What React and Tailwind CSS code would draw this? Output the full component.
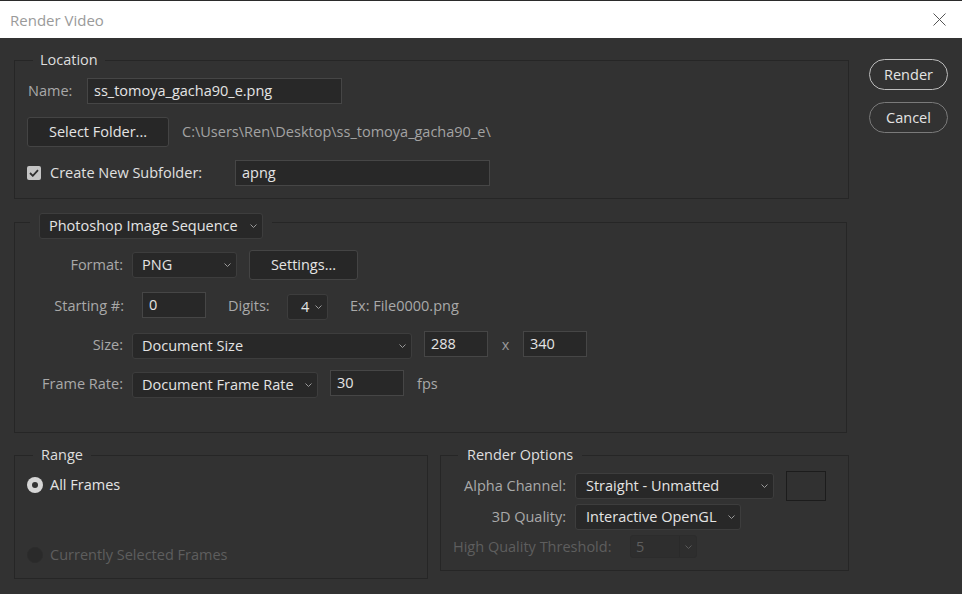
import React from "react";

const Chevron = ({ color = "#9a9a9a" }) => (
  <svg width="7" height="4" viewBox="0 0 7 4" className="shrink-0">
    <path d="M0.5 0.5 L3.5 3.5 L6.5 0.5" fill="none" stroke={color} strokeWidth="1" />
  </svg>
);

const Dropdown = ({ value, className = "" }) => (
  <div
    className={`flex h-[26px] items-center justify-between rounded-[3px] border border-[#3d3d3d] bg-[#282828] pl-[9px] pr-[5px] text-[#e4e4e4] ${className}`}
  >
    <span className="whitespace-nowrap">{value}</span>
    <Chevron />
  </div>
);

const TextInput = ({ value, className = "" }) => (
  <div
    className={`flex h-[26px] items-center border border-[#464646] bg-[#282828] pl-[6px] text-[#e4e4e4] ${className}`}
  >
    {value}
  </div>
);

const Label = ({ children, className = "" }) => (
  <span className={`whitespace-nowrap text-[#a9a9a9] ${className}`}>{children}</span>
);

const App = () => {
  return (
    <div className="h-[594px] w-[962px] overflow-hidden bg-[#2b2b2b] font-['Open_Sans',sans-serif] text-[14.5px] leading-[20px]">
      <div className="h-px bg-[#2b2b2b]" />

      {/* Title bar */}
      <div className="flex h-[37px] items-center justify-between bg-white pl-[10px] pr-[16px]">
        <span className="text-[15px] text-[#9a9a9a]">Render Video</span>
        <svg width="13" height="13" viewBox="0 0 13 13">
          <path d="M0.5 0.5 L12.5 12.5 M12.5 0.5 L0.5 12.5" stroke="#555" strokeWidth="1" />
        </svg>
      </div>

      {/* Body */}
      <div className="flex h-[556px] bg-[#323232] pl-[14px]">
        <div className="w-[835px] pt-[12px]">

          {/* Location */}
          <fieldset className="border border-[#262626] pb-[12px] pl-[13px] pt-[8px]">
            <legend className="ml-[5px] px-[7px] text-[#dedede]">Location</legend>

            <div className="flex h-[26px] items-center">
              <Label className="w-[59px]">Name:</Label>
              <TextInput value="ss_tomoya_gacha90_e.png" className="w-[255px]" />
            </div>

            <div className="mt-[13px] flex h-[30px] items-center">
              <button className="-ml-px h-[30px] w-[142px] rounded-[3px] border border-[#444] bg-[#272727] text-[#e4e4e4]">
                Select Folder...
              </button>
              <span className="ml-[13px] text-[#a3a3a3]">C:\Users\Ren\Desktop\ss_tomoya_gacha90_e\</span>
            </div>

            <div className="mt-[13px] flex h-[26px] items-center">
              <div className="-ml-px flex h-[14px] w-[14px] items-center justify-center rounded-[2px] bg-[#c4c4c4]">
                <svg width="10" height="8" viewBox="0 0 10 8">
                  <path d="M1 4 L3.8 6.8 L9 1.2" fill="none" stroke="#2e2e2e" strokeWidth="1.8" />
                </svg>
              </div>
              <span className="ml-[9px] w-[185px] text-[#e0e0e0]">Create New Subfolder:</span>
              <TextInput value="apng" className="w-[255px]" />
            </div>
          </fieldset>

          {/* Image sequence */}
          <fieldset className="mt-[7px] w-[833px] border border-[#262626] pb-[34px] pl-[13px] pt-[11px]">
            <legend className="ml-[2px] px-[9px] pt-[7px]">
              <Dropdown value="Photoshop Image Sequence" className="h-[25px] w-[224px]" />
            </legend>

            <div className="flex h-[30px] items-center">
              <Label className="w-[95px] text-right">Format:</Label>
              <Dropdown value="PNG" className="ml-[9px] w-[105px]" />
              <button className="ml-[12px] h-[30px] w-[109px] rounded-[3px] border border-[#444] bg-[#272727] text-[#e4e4e4]">
                Settings...
              </button>
            </div>

            <div className="mt-[12px] flex h-[28px] items-center">
              <Label className="w-[96px] text-right">Starting #:</Label>
              <TextInput value="0" className="ml-[18px] w-[64px] self-start" />
              <Label className="ml-[22px] w-[59px]">Digits:</Label>
              <div className="flex h-[26px] w-[41px] items-center justify-between self-end rounded-[3px] border border-[#3d3d3d] bg-[#282828] pl-[13px] pr-[5px] text-[#e4e4e4]">
                <span>4</span>
                <Chevron />
              </div>
              <Label className="ml-[22px]">Ex: File0000.png</Label>
            </div>

            <div className="mt-[11px] flex h-[28px] items-center">
              <Label className="w-[95px] text-right">Size:</Label>
              <Dropdown value="Document Size" className="ml-[9px] w-[280px] self-end" />
              <TextInput value="288" className="ml-[12px] w-[64px] self-start" />
              <span className="w-[35px] text-center text-[#9a9a9a]">x</span>
              <TextInput value="340" className="w-[64px] self-start" />
            </div>

            <div className="mt-[11px] flex h-[28px] items-center">
              <Label className="w-[95px] text-right">Frame Rate:</Label>
              <Dropdown value="Document Frame Rate" className="ml-[9px] w-[186px] self-end" />
              <TextInput value="30" className="ml-[12px] w-[74px] self-start" />
              <Label className="ml-[13px]">fps</Label>
            </div>
          </fieldset>

          {/* Range + Render Options */}
          <div className="mt-[12px] flex items-start gap-[12px]">
            <fieldset className="w-[414px] border border-[#262626] pb-[13px] pl-[13px] pt-[10px]">
              <legend className="ml-[5px] px-[8px] text-[#dedede]">Range</legend>

              <div className="flex h-[20px] items-center">
                <div className="-ml-px flex h-[16px] w-[16px] items-center justify-center rounded-full bg-[#d6d6d6]">
                  <div className="h-[6px] w-[6px] rounded-full bg-[#333]" />
                </div>
                <span className="ml-[7px] text-[#e4e4e4]">All Frames</span>
              </div>

              <div className="mt-[50px] flex h-[20px] items-center">
                <div className="-ml-px h-[16px] w-[16px] rounded-full border border-[#2c2c2c] bg-[#2a2a2a]" />
                <span className="ml-[7px] text-[#5e5e5e]">Currently Selected Frames</span>
              </div>
            </fieldset>

            <fieldset className="w-[409px] border border-[#262626] pb-[12px] pl-[12px] pt-[6px]">
              <legend className="ml-[5px] px-[9px] text-[#dedede]">Render Options</legend>

              <div className="flex h-[30px] items-center">
                <Label className="w-[113px] text-right">Alpha Channel:</Label>
                <Dropdown value="Straight - Unmatted" className="ml-[9px] w-[199px] pl-[10px]" />
                <div className="ml-[12px] h-[30px] w-[40px] border border-[#1c1c1c] bg-[#313131]" />
              </div>

              <div className="mt-[3px] flex h-[26px] items-center">
                <Label className="w-[113px] text-right">3D Quality:</Label>
                <Dropdown value="Interactive OpenGL" className="ml-[9px] w-[166px] pl-[10px]" />
              </div>

              <div className="mt-[5px] flex h-[23px] items-center">
                <span className="w-[177px] whitespace-nowrap text-[#5e5e5e]">High Quality Threshold:</span>
                <div className="flex h-[23px] w-[67px] items-center rounded-[3px] border border-[#2c2c2c] bg-[#2e2e2e] text-[#5e5e5e]">
                  <span className="w-[48px] pl-[5px]">5</span>
                  <div className="flex h-full flex-1 items-center justify-center border-l border-[#2a2a2a]">
                    <Chevron color="#5a5a5a" />
                  </div>
                </div>
              </div>
            </fieldset>
          </div>
        </div>

        {/* Buttons */}
        <div className="ml-[20px] flex flex-col gap-[12px] pt-[21px]">
          <button className="h-[31px] w-[79px] rounded-full border border-[#bdbdbd] text-[#e4e4e4]">Render</button>
          <button className="h-[31px] w-[79px] rounded-full border border-[#7a7a7a] text-[#e4e4e4]">Cancel</button>
        </div>
      </div>
    </div>
  );
};

export default App;
